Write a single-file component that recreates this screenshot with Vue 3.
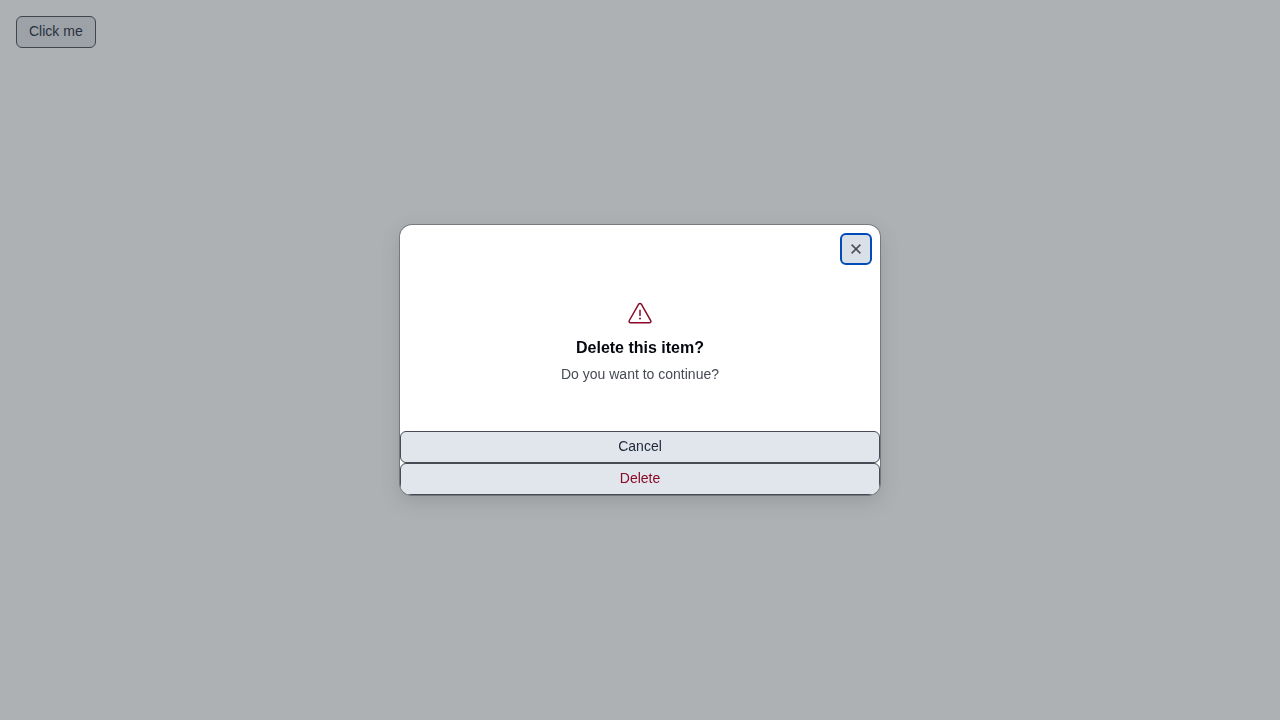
<script setup>
import { ref, onMounted, nextTick } from 'vue'

const open = ref(true)
const closeButton = ref(null)

async function show() {
  open.value = true
  await nextTick()
  closeButton.value?.focus()
}

function hide() {
  open.value = false
}

onMounted(() => closeButton.value?.focus())
</script>

<template>
  <main class="page">
    <button type="button" class="btn" @click="show">Click me</button>
  </main>
  <div v-if="open" class="backdrop" @keydown.esc="hide">
    <section class="dialog" role="alertdialog" aria-modal="true" aria-labelledby="dialog-title" aria-describedby="dialog-text">
      <header class="dialog-header">
        <button ref="closeButton" type="button" class="close" aria-label="Close" @click="hide">
          <svg width="16" height="16" viewBox="0 0 16 16" fill="none" stroke="currentColor" stroke-width="1.5" aria-hidden="true">
            <path d="M3.6 3.6 12.4 12.4M12.4 3.6 3.6 12.4" />
          </svg>
        </button>
      </header>
      <div class="dialog-body">
        <svg class="warning" width="24" height="24" viewBox="0 0 24 24" fill="none" stroke="currentColor" stroke-width="1.5" stroke-linejoin="round" aria-hidden="true">
          <path d="M10.7 3.2 1.3 19.5a1.5 1.5 0 0 0 1.3 2.25h18.8a1.5 1.5 0 0 0 1.3-2.25L13.3 3.2a1.5 1.5 0 0 0-2.6 0Z" />
          <path d="M12 8.75v6.25" />
          <circle cx="12" cy="17.5" r="1" fill="currentColor" stroke="none" />
        </svg>
        <h1 id="dialog-title">Delete this item?</h1>
        <p id="dialog-text">Do you want to continue?</p>
      </div>
      <footer class="dialog-actions">
        <button type="button" class="btn" @click="hide">Cancel</button>
        <button type="button" class="btn danger" @click="hide">Delete</button>
      </footer>
    </section>
  </div>
</template>

<style>
body {
  background: #ffffff;
}
</style>

<style scoped>
.page {
  padding: 16px;
}

.page,
.backdrop {
  font-family: "Liberation Sans", Arial, sans-serif;
  font-size: 14px;
}

.btn {
  height: 32px;
  padding: 0 12px 2px;
  border: 1px solid #474b54;
  border-radius: 6px;
  background: #e1e6ed;
  color: #212b3b;
  font: inherit;
  line-height: 20px;
  cursor: pointer;
}

.page .btn {
  display: block;
}

.btn.danger {
  color: #8a0a26;
}

.backdrop {
  position: fixed;
  inset: 0;
  display: flex;
  align-items: center;
  justify-content: center;
  background: rgba(52, 60, 65, 0.4);
}

.dialog {
  width: 100%;
  max-width: 480px;
  border-radius: 12px;
  overflow: hidden;
  background: #ffffff;
  box-shadow: 0 0 0 1px rgba(71, 75, 84, 0.5), 0 6px 20px rgba(52, 60, 65, 0.2);
}

.dialog-header {
  display: flex;
  justify-content: flex-end;
  padding: 8px;
}

.close {
  display: flex;
  align-items: center;
  justify-content: center;
  width: 32px;
  height: 32px;
  padding: 0;
  border: 2px solid transparent;
  border-radius: 6px;
  background: #dae0e8;
  color: #474b54;
  cursor: pointer;
}

.close:focus {
  border-color: #004bb8;
  outline: none;
}

.dialog-body {
  display: flex;
  flex-direction: column;
  align-items: center;
  padding: 28px 24px 46px;
  text-align: center;
}

.warning {
  color: #8a0a26;
}

h1 {
  margin: 12px 0 4px;
  color: #05080f;
  font-size: 16px;
  line-height: 22px;
}

p {
  margin: 0;
  color: #474b54;
  line-height: 22px;
}

.dialog-actions {
  display: flex;
  flex-direction: column;
}
</style>
